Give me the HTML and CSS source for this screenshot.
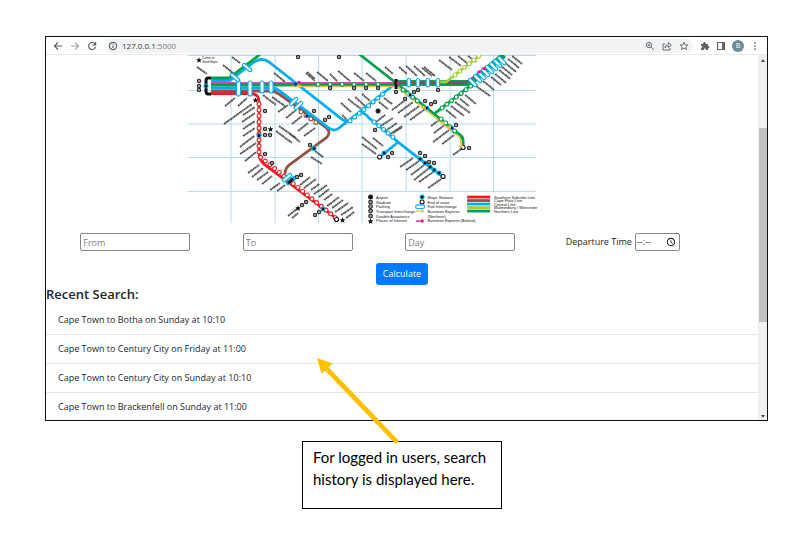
FILE: index.html
```html
<!DOCTYPE html>
<html lang="en-GB">
<head>
<meta charset="utf-8">
<title>Train planner</title>
<link rel="stylesheet" href="styles.css">
</head>
<body>
<main class="browser">
  <header class="toolbar">
    <button class="icon" aria-label="Back"><svg viewBox="0 0 10 10"><path d="M9 5H1.5M5 1.5L1.5 5L5 8.500"/></svg></button>
    <button class="icon dim" aria-label="Forward"><svg viewBox="0 0 10 10"><path d="M1 5h7.500M5 1.500L8.500 5L5 8.500"/></svg></button>
    <button class="icon" aria-label="Reload"><svg viewBox="0 0 10 10"><path d="M8 3A3.500 3.500 0 1 0 8.500 6M8.600 1v2.800H5.800"/></svg></button>
    <div class="address">
      <svg class="glyph" viewBox="0 0 10 10"><circle cx="5" cy="5" r="3.600"/><path d="M5 4.500v2.500M5 2.800v.8"/></svg>
      <span class="url">127.0.0.1<span class="port">:5000</span></span>
      <button class="icon" aria-label="Zoom"><svg class="thin" viewBox="0 0 10 10"><circle cx="4" cy="4" r="2.700"/><path d="M6 6l3 3M2.800 4h2.400M4 2.800v2.400"/></svg></button>
      <button class="icon" aria-label="Share"><svg class="thin" viewBox="0 0 10 10"><path d="M3 3H1v6h7V7M3 7C3 4.500 5 3.500 6.500 3.500V1.500L9.300 4.300L6.500 6.500V5C5 5 4 5.500 3 7z"/></svg></button>
      <button class="icon" aria-label="Bookmark"><svg class="thin" viewBox="0 0 10 10"><path d="M5 1.200l1.100 2.600 2.800.2-2.100 1.800.7 2.800L5 7.100 2.500 8.600l.7-2.800L1.100 4l2.800-.2z"/></svg></button>
    </div>
    <div class="tools">
      <button class="icon" aria-label="Extensions"><svg viewBox="0 0 10 10"><path class="solid" d="M1 3h2.200c-.5-2.600 3-2.600 2.600 0H8v2c2-.2 2 2.500 0 2.300V9H5.700c.2-1.900-2-1.900-1.900 0H1V6.800c1.900.1 1.900-1.900 0-1.800z"/></svg></button>
      <button class="icon" aria-label="Side panel"><svg viewBox="0 0 10 10"><path d="M1.500 1.500h7v7h-7z"/><path class="solid" d="M6 1h3v8H6z"/></svg></button>
      <button class="avatar" aria-label="Profile">B</button>
      <button class="icon" aria-label="Menu"><svg viewBox="0 0 10 10"><path class="solid" d="M4.300 1h1.500v1.500H4.300zM4.300 4.300h1.500v1.500H4.300zM4.300 7.600h1.500v1.500H4.300z"/></svg></button>
    </div>
  </header>

  <div class="viewport">
    <div class="page">
      <svg class="map" viewBox="188 55 427 170" role="img" aria-label="Rail network map">
        <path class="grid" d="M188 55.500H536M188 90.500H536M188 124H536M188 157.500H536M188 191.500H536M231 55V223M275 55V223M318.500 55V223M362 55V223M406 55V191M450 55V191M493.500 55V191"/>

        <g class="labels">
          <path d="M197 67l10 7M223 65l11 9M232 57l8 6M274 73l11 9M307 72l8 7M225 106l10-8M238 106l9-8M224 124l28-20M243 115l12-8M242 122l13-9M243 129l12-8M243 136l12-8M263 95l13 10M272 97l13 9M278 112l10-7M286 118l10-8M292 124l10-8M298 131l10-8M279 126l17 12M276 131l16 12M304 136l11-8"/>
          <path d="M240 147l14-11M240 154l16-11M245 161l11-9M248 173l11-8M252 177l11-9M257 180l11-8M262 184l10-8M270 190l10-7M277 191l8-6M300 185l10-8M304 188l12-9M311 190l8-6M314 194l13-9M319 197l10-8M324 200l8-6M327 206l12-9M332 208l11-8M335 212l13-9M341 215l12-8M346 218l8-6M288 216l10-8M292 218l6-5M290 134l10 8M315 151l8 6M311 157l11 7"/>
          <path d="M306 73l9 8M317 72l11 9M330 74l7 7M338 71l12 10M354 73l10 8M366 73l10 8M385 67l8 7M399 67l8 7M406 66l11 10M414 66l11 10M422 68l10 8M341 103l10 9M348 99l13 10M355 97l10 9M362 94l8 7M379 102l9 7M384 98l8 6M392 110l12-9M398 113l15-11M404 117l15-11M410 120l15-11M376 122l9-7M379 127l14-9M385 131l12-8M389 135l13-9M342 115l5 5"/>
          <path d="M439 60l13 10M449 57l12 9M458 56l10 8M468 56l8 6M424 67l11 9M512 56l10 8M508 59l11 9M505 63l11 9M502 67l10 8M499 70l11 9M495 74l11 9M491 77l10 8M483 81l11 9M476 86l14 10M465 95l11 9M460 99l9 7M455 102l15 11M451 106l13 10M446 110l10 8M431 126l8-6M434 133l13-10M433 142l16-12M442 144l12-9"/>
          <path d="M362 137l15 12M373 138l10 8M362 144l14 10M393 133l9-6M400 167l13-9M406 170l13-9M411 175l13-10M414 180l15-12M419 182l14-10M428 188l13-9M453 155l8-6"/>
        </g>

        <g class="routes">
          <path class="red" d="M211 93.500H250Q259 93.500 259 102V153Q259 160 264 164L336 218"/>
          <path class="brown" d="M211 91H271Q275 91 279 94L324 126Q332 131 327 137L289 165Q285 168 285 174"/>
          <path class="blue" d="M211 88H272Q276 88 280 91L329 128Q334 132 339 128L396 83M211 80.500H230L254 62Q262 57 269 62L343 120Q346 123 349 120"/>
          <path class="green" d="M211 78H229L260 54.500"/>
          <path class="green" d="M211 85H396M359 54L396 83L460 135Q463 137 463 141V147M435 113L475 82"/>
          <path class="magenta thin" d="M211 83H396"/>
          <path class="yellow thin" d="M290 86.500H396M397 87L459 137Q461 139 461 146"/>
          <path class="green broad" d="M396 83H470L504 55"/>
          <path class="magenta thin" d="M396 83H465L486 67"/>
          <path class="lime" d="M440 82H446L480 55"/>
          <path class="blue" d="M361 113Q364 112 369 118L398 142L443 177M398 142L380 157"/>
        </g>

        <g class="stops">
          <path class="red-dot" d="M259 104V156L337 219"/><path class="hole" d="M259 104V156L337 219"/>
          <path class="blue-dot" d="M350 121L384 93"/><path class="hole" d="M350 121L384 93"/>
          <path class="green-dot" d="M442 108L472 85"/><path class="hole" d="M442 108L472 85"/>
          <path class="lime-dot" d="M455 75L480 55"/><path class="hole" d="M455 75L480 55"/>
          <path class="green-dot wide" d="M318 84.500H385"/><path class="hole wide" d="M318 84.500H385"/>
          <path class="brown-dot" d="M301 112L318 124"/><path class="hole" d="M301 112L318 124"/>
          <path class="blue-dot" d="M374 122L394 138"/><path class="hole" d="M374 122L394 138"/>
          <path class="green-dot" d="M403 90L420 103M441 119L458 134"/><path class="hole" d="M403 90L420 103M441 119L458 134"/>
        </g>

        <g class="oval">
          <rect x="236.500" y="81" width="4" height="15" rx="2"/><rect x="248" y="81" width="4" height="15" rx="2"/><rect x="260" y="81" width="4" height="12" rx="2"/><rect x="269" y="81" width="4" height="12" rx="2"/>
          <rect x="407" y="78.500" width="3.500" height="8.500" rx="1.700"/><rect x="416" y="78.500" width="3.500" height="8.500" rx="1.700"/><rect x="426" y="78.500" width="3.500" height="8.500" rx="1.700"/><rect x="436" y="78.500" width="3.500" height="8.500" rx="1.700"/>
          <path d="M232 75l6 5M244 65l6 5M291 104l5-5M296 108l5-5M284 180l6-5M288 183l6-5"/>
          <path class="inner" d="M232 75l6 5M244 65l6 5M291 104l5-5M296 108l5-5M284 180l6-5"/>
          <path d="M470 80l5 5M475 76l5 5M479 73l5 5M483 70l5 5M487 67l5 5M491 64l5 5M495 61l5 5M499 58l5 5"/>
          <path class="inner" d="M470 80l5 5M475 76l5 5M479 73l5 5M483 70l5 5M487 67l5 5M491 64l5 5M495 61l5 5M499 58l5 5"/>
        </g>

        <path class="terminus" d="M211 78H208Q206 78 206 81V91Q206 94 208 94H211M396 79V89M288 183l5-4"/>
        <g class="major">
          <circle cx="206" cy="86" r="2"/><circle cx="295.500" cy="84" r="2"/><circle cx="259" cy="135.500" r="2"/><circle cx="314" cy="148.500" r="2"/><circle cx="307" cy="116" r="1.800"/><circle cx="323" cy="209" r="2"/><circle cx="384" cy="153" r="2"/><circle cx="410" cy="95" r="1.800"/><circle cx="427" cy="108" r="1.800"/><circle cx="452" cy="128" r="1.800"/><circle cx="420" cy="159" r="2"/><circle cx="425" cy="163" r="2"/><circle cx="430" cy="167" r="2"/><circle cx="434" cy="170" r="2"/><circle cx="439" cy="173" r="2"/><circle cx="422" cy="197" r="2"/>
        </g>
        <g class="end">
          <circle cx="336.500" cy="219.500" r="2"/><circle cx="379.500" cy="157" r="2"/><circle cx="443" cy="176.500" r="2"/><circle cx="463" cy="147.500" r="2"/><circle cx="422" cy="202" r="2"/>
        </g>
        <g class="facility">
          <circle cx="199" cy="81" r="1.700"/><circle cx="199" cy="86" r="1.700"/><circle cx="199" cy="90" r="1.700"/><circle cx="298" cy="57" r="1.700"/><circle cx="339" cy="57" r="1.700"/><circle cx="265" cy="111" r="1.700"/><circle cx="265" cy="129" r="1.700"/><circle cx="265" cy="135" r="1.700"/><circle cx="270" cy="135" r="1.700"/><circle cx="265" cy="154" r="1.700"/><circle cx="272" cy="163" r="1.700"/><circle cx="297" cy="177" r="1.700"/><circle cx="301" cy="175" r="1.700"/><circle cx="310" cy="145" r="1.700"/><circle cx="302" cy="205" r="1.700"/><circle cx="306" cy="202" r="1.700"/><circle cx="315" cy="215" r="1.700"/><circle cx="319" cy="212" r="1.700"/>
          <circle cx="330" cy="88" r="1.700"/><circle cx="354" cy="88" r="1.700"/><circle cx="366" cy="88" r="1.700"/><circle cx="378" cy="88" r="1.700"/><circle cx="314" cy="111" r="1.700"/><circle cx="325" cy="120" r="1.700"/><circle cx="329" cy="117" r="1.700"/><circle class="full" cx="378" cy="111" r="2"/><circle cx="396" cy="92" r="1.700"/><circle cx="405" cy="99" r="1.700"/><circle cx="414" cy="92" r="1.700"/><circle cx="418" cy="90" r="1.700"/><circle cx="425" cy="101" r="1.700"/><circle cx="431" cy="104" r="1.700"/><circle cx="435" cy="102" r="1.700"/><circle cx="456" cy="125" r="1.700"/><circle cx="438" cy="90" r="1.700"/><circle cx="375" cy="130" r="1.700"/><circle cx="388" cy="157" r="1.700"/><circle cx="392" cy="153" r="1.700"/><circle cx="420" cy="153" r="1.700"/><circle cx="425" cy="156" r="1.700"/><circle cx="429" cy="162" r="1.700"/><circle cx="434" cy="163" r="1.700"/><circle cx="469" cy="148" r="1.700"/>
          <circle class="full" cx="370.500" cy="197" r="2"/><circle cx="370.500" cy="202" r="1.900"/><circle cx="370.500" cy="206.500" r="1.900"/><circle cx="370.500" cy="211" r="1.900"/><circle cx="370.500" cy="216" r="1.900"/>
        </g>
        <g class="star">
          <path id="star" d="M370.500 218.300l.8 1.900 2 .1-1.500 1.400.5 2-1.800-1.100-1.800 1.100.5-2-1.500-1.400 2-.1z"/>
          <use href="#star" x="-171.500" y="-161"/><use href="#star" x="-115" y="-121"/><use href="#star" x="-100" y="-92"/><use href="#star" x="-72.500" y="-13"/><use href="#star" x="-28" y="-1"/>
        </g>
        <g class="express"><circle cx="299" cy="86" r="1.800"/><circle cx="407" cy="95" r="1.800"/><circle cx="423" cy="107.500" r="1.800"/><circle cx="443" cy="123" r="1.800"/><circle cx="449" cy="127.500" r="1.800"/><circle cx="461" cy="146" r="1.800"/><circle cx="422" cy="211" r="1.800"/></g>
        <g class="boland"><circle cx="299" cy="82.500" r="1.800"/><circle cx="398" cy="83" r="1.800"/><circle cx="479" cy="72" r="1.800"/><circle cx="484" cy="68.500" r="1.800"/><circle cx="422" cy="221" r="1.800"/></g>

        <g class="routes">
          <path class="magenta thin" d="M416 221h4"/><path class="yellow thin" d="M416 211h4"/>
          <path class="red" d="M467 197h23"/><path class="brown" d="M467 200.500h23"/><path class="blue" d="M467 204h23"/><path class="lime" d="M467 207.500h23"/><path class="green" d="M467 211h23"/>
        </g>
        <g class="oval"><rect x="415.500" y="204.800" width="9" height="3.600" rx="1.800"/></g>
        <g class="legend">
          <text class="tiny" x="202" y="59">Centre of</text><text class="tiny" x="202" y="63">Good Hope</text>
          <text x="376" y="198.500">Airport</text><text x="376" y="203.500">Stadium</text><text x="376" y="208">Parking</text><text x="376" y="212.500">Transport Interchange</text><text x="376" y="217.500">Disable Assistance</text><text x="376" y="222">Places of Interest</text>
          <text x="427.500" y="198.500">Major Stations</text><text x="427.500" y="203.500">End of route</text><text x="427.500" y="208">Rail Interchange</text><text x="427.500" y="212.500">Business Express</text><text x="427.500" y="217.500">(Northern)</text><text x="427.500" y="222">Business Express (Boland)</text>
          <text x="494" y="198.500">Southern Suburbs Line</text><text x="494" y="202">Cape Flats Line</text><text x="494" y="205.500">Central Line</text><text x="494" y="209">Malmesbury / Worcester</text><text x="494" y="212.500">Northern Line</text>
        </g>
      </svg>

      <form class="search">
        <div class="fields">
          <input class="field" type="text" placeholder="From" aria-label="From">
          <input class="field" type="text" placeholder="To" aria-label="To">
          <input class="field" type="text" placeholder="Day" aria-label="Day">
          <div class="departure"><label for="time">Departure Time</label><input class="field time" id="time" type="time"></div>
        </div>
        <button class="calculate" type="button">Calculate</button>
      </form>

      <h2 class="heading">Recent Search:</h2>
      <ul class="history">
        <li>Cape Town to Botha on Sunday at 10:10</li>
        <li>Cape Town to Century City on Friday at 11:00</li>
        <li>Cape Town to Century City on Sunday at 10:10</li>
        <li>Cape Town to Brackenfell on Sunday at 11:00</li>
      </ul>
    </div>
    <div class="scrollbar"><i class="up"></i><i class="thumb"></i><i class="down"></i></div>
  </div>
</main>

<aside class="callout">
  <svg class="arrow" viewBox="0 0 84 86" aria-hidden="true"><path d="M0 0L15.500 5.500L11.600 9.200L82 83L78.500 86L8 12.400L4.500 15.700Z"/></svg>
  For logged in users, search history is displayed here.
</aside>
</body>
</html>
```
FILE: styles.css
```css
* { box-sizing: border-box; }
body {
  margin: 0;
  padding: 36px 27px 0 45px;
  background: #fff;
  color: #212529;
  font: 9px/16px "Open Sans", "Noto Sans", sans-serif;
}
button, input { font: inherit; }
button { border: 0; padding: 0; background: none; }

.browser { border: 1px solid #111; }
.toolbar {
  display: flex;
  align-items: center;
  gap: 7px;
  height: 18px;
  padding: 0 7px;
  border-bottom: 1px solid #e8eaed;
}
.tools { display: flex; align-items: center; gap: 6px; }
.icon { width: 10px; height: 10px; flex: none; }
.icon svg, .glyph { display: block; width: 10px; height: 10px; fill: none; stroke: #5f6368; stroke-width: 1.2; }
.icon .thin { stroke-width: 0.9; }
.icon .solid { fill: #5f6368; stroke: none; }
.dim { opacity: 0.55; }
.address {
  display: flex;
  flex: 1;
  align-items: center;
  gap: 7px;
  height: 14px;
  padding: 0 4px;
  border-radius: 7px;
  background: #f1f3f4;
}
.url { flex: 1; margin-left: -3px; font-size: 8px; line-height: 14px; color: #35383b; }
.port { color: #777b80; }
.avatar {
  width: 12px;
  height: 12px;
  border-radius: 50%;
  background: #6c8c9c;
  color: #fff;
  font-size: 7px;
  line-height: 12px;
}

.viewport { display: flex; }
.page { flex: 1; min-width: 0; }
.map { display: block; width: 60%; margin: 0 auto; fill: none; }
.grid { stroke: #b4dfe7; stroke-width: 1; }
.labels { stroke: #333; stroke-width: 1.9; stroke-dasharray: 2 0.4 1.3 0.3; opacity: 0.85; }
.routes { stroke-width: 2.8; stroke-linejoin: round; }
.routes .thin { stroke-width: 1.4; }
.routes .broad { stroke-width: 6; }
.red { stroke: #ee1c25; }
.brown { stroke: #8f5444; }
.blue { stroke: #00aeef; }
.green { stroke: #00a14b; }
.magenta { stroke: #d4148a; }
.yellow { stroke: #e8c73a; }
.lime { stroke: #a6ce39; }
.stops { stroke-linecap: round; stroke-width: 5; stroke-dasharray: 0 6; }
.stops .hole { stroke: #fff; stroke-width: 2.8; }
.stops .wide { stroke-dasharray: 0 12; }
.red-dot { stroke: #ee1c25; }
.blue-dot { stroke: #00aeef; }
.green-dot { stroke: #00a14b; }
.lime-dot { stroke: #a6ce39; }
.brown-dot { stroke: #8f5444; }
.oval rect { fill: #fff; stroke: #00aeef; stroke-width: 1.1; }
.oval path { stroke: #00aeef; stroke-width: 4.4; stroke-linecap: round; }
.oval .inner { stroke: #fff; stroke-width: 2.2; }
.terminus { stroke: #111; stroke-width: 3; }
.major { fill: #111; stroke: #00aeef; stroke-width: 1; }
.end { fill: #fff; stroke: #111; stroke-width: 1.1; }
.facility { fill: #999; stroke: #222; stroke-width: 1; }
.facility .full, .star { fill: #111; }
.express { fill: #efc15a; }
.boland { fill: #e6198e; }
.legend { fill: #111; font: 4px "Liberation Sans", sans-serif; }
.legend .tiny { font-size: 3px; }

.search { display: flex; flex-direction: column; align-items: center; padding-top: 8px; }
.fields {
  display: grid;
  grid-template-columns: repeat(4, 1fr);
  align-items: center;
  justify-items: center;
  align-self: stretch;
  padding: 0 54px 0 8px;
}
.field {
  width: 110px;
  height: 18px;
  padding: 0 2px;
  border: 1px solid #858585;
  border-radius: 2px;
  background: #fff;
  color: #333;
}
.field::placeholder { color: #808080; }
.departure { display: flex; align-items: center; gap: 3px; white-space: nowrap; }
.field.time { width: 45px; padding: 0 1px; }
.time::-webkit-datetime-edit { padding: 0; }
.time::-webkit-datetime-edit-hour-field, .time::-webkit-datetime-edit-minute-field { padding: 0; }
.time::-webkit-datetime-edit-ampm-field { display: none; }
.time::-webkit-calendar-picker-indicator { width: 10px; height: 10px; margin: 0; padding: 0 2px; }
.calculate {
  margin-top: 12px;
  height: 22px;
  padding: 0 7px;
  border-radius: 3px;
  background: #007bff;
  color: #fff;
}
.heading { margin: 0; font-size: 13px; line-height: 18px; font-weight: 600; }
.history { list-style: none; margin: 3px 0 0; padding: 0; }
.history li { padding: 6px 12px; border-bottom: 1px solid #e6e8ea; }
.history li:last-child { padding-bottom: 5px; border: 0; }

.scrollbar {
  display: flex;
  flex-direction: column;
  align-items: center;
  width: 9px;
  padding: 4px 0 2px;
  background: #f0f0f0;
}
.up { border: 2px solid transparent; border-top: 0; border-bottom: 3px solid #505050; }
.down { margin-top: auto; border: 2px solid transparent; border-bottom: 0; border-top: 3px solid #505050; }
.thumb { width: 8px; height: 54%; margin-top: 66px; background: #c1c1c1; }

.callout {
  position: relative;
  width: 200px;
  margin: 20px 0 0 257px;
  padding: 4px 10px 18px;
  border: 1px solid #000;
  color: #000;
  font: 15px/22px Lato, sans-serif;
}
.arrow { position: absolute; left: 14px; top: -84px; width: 84px; height: 86px; fill: #ffc000; }
```
